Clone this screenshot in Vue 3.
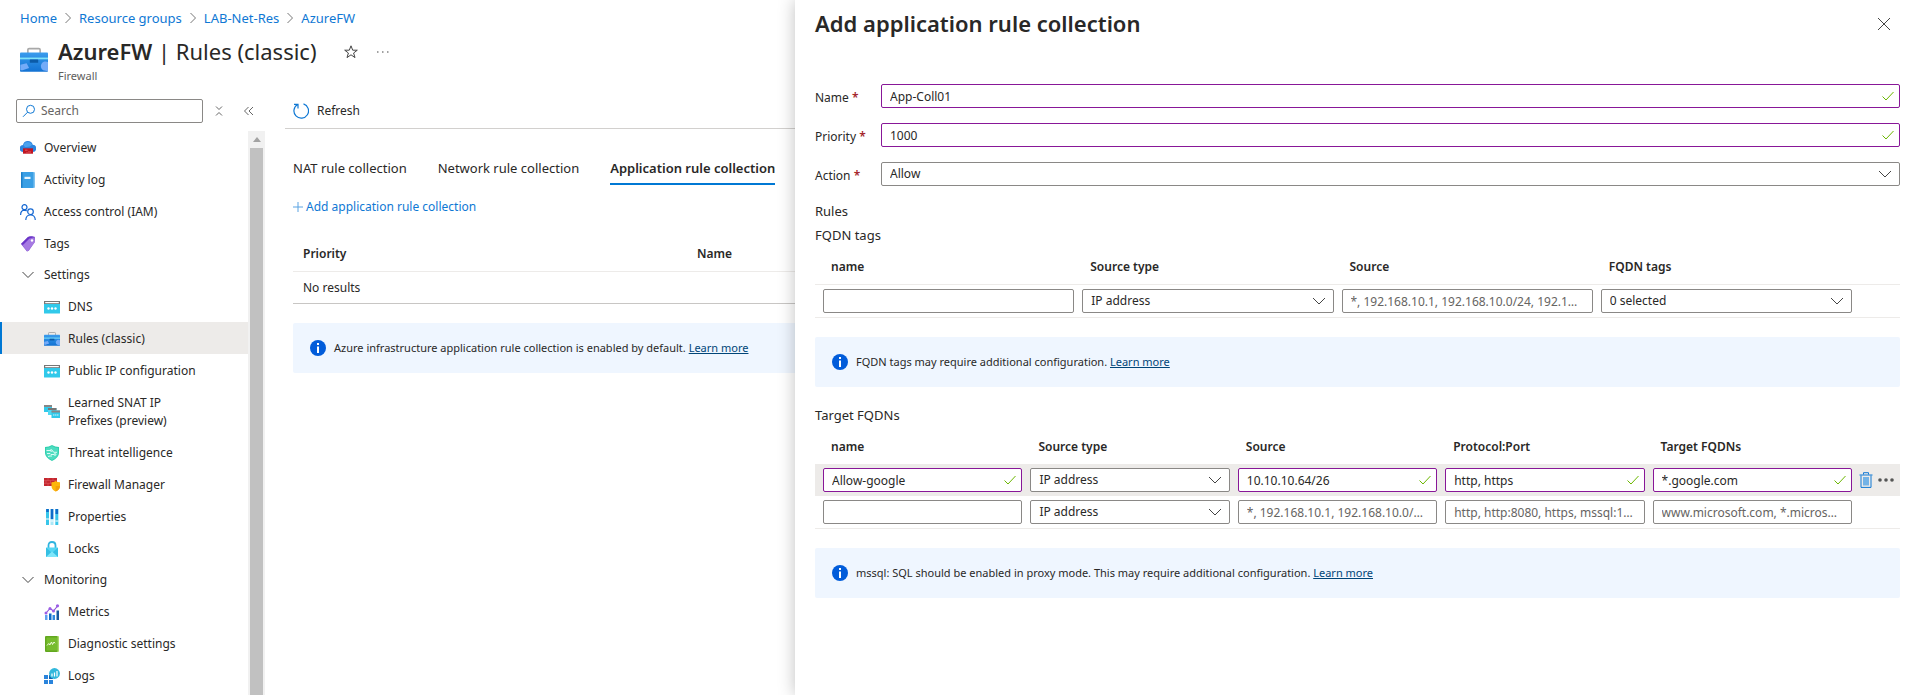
<script setup>
import { ref } from 'vue'

const glyphs = {
  toolbox: `<defs><linearGradient id="case" x1="0" y1="0" x2="0" y2="1"><stop offset="0" stop-color="#3a9ced"/><stop offset="1" stop-color="#1272d3"/></linearGradient></defs><path d="M4.500 4V2.200Q4.500 1.500 5.200 1.500H10.800Q11.500 1.500 11.500 2.200V4" fill="none" stroke="#a8a8a8" stroke-width=".9"/><rect x="0" y="3.700" width="16" height="11" rx=".5" fill="url(#case)"/><rect x="0" y="6.600" width="16" height="1" fill="#7fe3f8"/><rect x="5.600" y="7.700" width="4.800" height="1.900" rx=".3" fill="#0b5ba8"/><path d="M.200 10.700L3.800 9.900 5.200 12.600 1.500 13.800H.200zM16 9.200A2.600 2.600 0 0 0 13.200 13.800L16 14.400z" fill="#74abf8"/>`,
  overview: `<path d="M3.400 12A3.500 3.500 0 0 1 3 5 5 5 0 0 1 12.700 4.800 3.600 3.600 0 0 1 12.600 12z" fill="#2d84df"/><path d="M3.400 5A4.800 4.800 0 0 1 12.200 4.800Q10 7.500 5 7z" fill="#4ba2ef"/><rect x="3" y="8.300" width="10" height="5.400" fill="#c01522"/><path d="M5 10.200H7.500M8 12h3M7 12v1.200" stroke="#f4888c" stroke-width=".6"/>`,
  book: `<rect x="2" y="0" width="13" height="16" rx="1" fill="#82c3ef"/><rect x="1" y="0" width="12.500" height="16" rx="1" fill="#3a9fe4"/><rect x="1" y="0" width="1.500" height="16" rx=".7" fill="#1c7fc9"/><rect x="4.500" y="4.800" width="6" height="2.200" fill="#e9f5fd"/>`,
  people: `<g fill="none" stroke="#1467d2" stroke-width="1.200"><circle cx="4.500" cy="3.200" r="2.500"/><path d="M.6 11Q.6 6.300 4.500 6.200 5.700 6.200 6.700 7"/><circle cx="10.500" cy="7.700" r="2.800"/><path d="M5.800 16Q5.900 11 10.500 11T15.300 16"/></g>`,
  tag: `<path d="M1 8L8 1Q9 .3 10 .3L14 .6Q15 .8 15 1.800L14.700 6 9 14.500 7 15.500z" fill="#7f4ed0"/><path d="M1 8L8 1 13 .3 5 9z" fill="#6a35c8"/><path d="M2.500 9.500L9.500 2.500 14.500 2 14.700 6.500 7.500 15.500z" fill="#a67ae2"/><circle cx="12" cy="4.500" r="1.200" fill="#fff"/>`,
  dns: `<rect x="0" y="2" width="16" height="12.500" rx=".5" fill="#31c9ea"/><path d="M0 2H16V5H0z" fill="#767676"/><rect x="1.200" y="3" width="13.600" height="1.200" fill="#fff"/><circle cx="4.500" cy="9.500" r="1.200" fill="#fff"/><circle cx="8" cy="9.500" r="1.200" fill="#fff"/><circle cx="11.500" cy="9.500" r="1.200" fill="#fff"/>`,
  prefixes: `<rect x="0" y="1" width="8" height="7" fill="#31c9ea"/><rect x="0" y="1" width="8" height="2" fill="#868686"/><rect x="4" y="4" width="8.500" height="7" fill="#50d8f2"/><rect x="4" y="4" width="8.500" height="2" fill="#767676"/><rect x="7.500" y="6.500" width="8.500" height="7.500" fill="#31c9ea"/><rect x="7.500" y="6.500" width="8.500" height="2" fill="#868686"/><path d="M9.200 11h1.200M11.200 11h1.200M13.200 11h1.200" stroke="#fff" stroke-width="1.200"/>`,
  shield: `<path d="M8 0Q11 2 15 2V8Q15 12.500 8 16 1 12.500 1 8V2Q5 2 8 0z" fill="#2fcfae"/><path d="M8 1Q11 3 14 3V8Q14 12 8 15 2 12 2 8V3Q5 3 8 1z" fill="#4ddcc0"/><g fill="none" stroke="#e9fffa" stroke-width=".9"><path d="M2.500 5.500H6.500M8 5.500l2 1.800h3M3 8.500h3l1 1h3M4 11.500l2-.5h2"/><circle cx="7.200" cy="5.500" r=".9"/><circle cx="11" cy="9.500" r=".9"/></g>`,
  manager: `<rect x="0" y="1" width="13" height="8" fill="#c4262e"/><path d="M0 3.600h13M0 6.300h13M4 1v2.600M9 1v2.600M2 3.600v2.700M6.500 3.600v2.700M4 6.300V9" stroke="#e2666d" stroke-width=".5"/><path d="M11.700 4Q13.500 5.300 16 5.300V9Q16 12.500 11.700 14.500 7.500 12.500 7.500 9V5.300Q10 5.300 11.700 4z" fill="#fdb70c"/><path d="M11.700 9H16Q16 12.500 11.700 14.500z" fill="#f4a00c"/>`,
  properties: `<path d="M3.500 0V16" stroke="#38c6ea" stroke-width="3"/><path d="M8 0V16" stroke="#a9e7f7" stroke-width="3"/><path d="M12.800 0V16" stroke="#38c6ea" stroke-width="3"/><path d="M8 0V10M3.500 0V3M12.800 0V5" stroke="#0f6cc9" stroke-width="2.600"/><path d="M2 10h3M11.300 12h3M6.500 12h3" stroke="#fff" stroke-width="1"/>`,
  lock: `<path d="M4.500 7V4.500Q4.500 1 8 1T11.500 4.500V7" fill="none" stroke="#2fb4df" stroke-width="1.800"/><rect x="2" y="6.500" width="12" height="9.500" rx=".7" fill="#55d6f3"/><path d="M2 6.500L8 12 14 6.500V16H2z" fill="#35bfe3"/><path d="M2 16L8 10.500 14 16z" fill="#7ee6fa"/>`,
  metrics: `<path d="M1 11h2.500v5H1z" fill="#5ea0ef"/><path d="M5 9.500h2.500V16H5z" fill="#0f6cc9"/><path d="M8.500 11H11v5H8.500z" fill="#2f8ae0"/><path d="M12.500 6.500H15V16h-2.500z" fill="#17599f"/><path d="M2 9L6 4.500 9.500 7 13.500 2" fill="none" stroke="#8a4fd8" stroke-width="1.100"/><g fill="#9b5de5"><circle cx="2" cy="9" r="1.500"/><circle cx="6" cy="4.500" r="1.500"/><circle cx="9.500" cy="7" r="1.500"/><circle cx="13.500" cy="1.800" r="1.600"/></g>`,
  diagnostic: `<rect x="2" y="0" width="13" height="16" rx="1" fill="#aada68"/><rect x="1" y="0" width="12.500" height="16" rx="1" fill="#62a71f"/><rect x="2.500" y="1.500" width="10.500" height="13" fill="#76bc2d"/><path d="M3 9.500l1.800-2 1 1.500 1.700-3 1 2.500L10 6l1 1.300" fill="none" stroke="#effadb" stroke-width="1"/>`,
  logs: `<path d="M0 7h4v4H0zM0 12h4v4H0zM5 12h4v4H5z" fill="#2a84dc"/><path d="M5 7h4v4H5z" fill="#0f5fb2"/><circle cx="10.500" cy="5.500" r="5.400" fill="#32b8dc"/><path d="M8 5.500V8.500M10.500 4.500v4M13 3v5.500" stroke="#fff" stroke-width="1.200"/>`,
}

const topItems = [
  { label: 'Overview', icon: 'overview' },
  { label: 'Activity log', icon: 'book' },
  { label: 'Access control (IAM)', icon: 'people' },
  { label: 'Tags', icon: 'tag' },
]
const groups = [
  {
    label: 'Settings',
    items: [
      { label: 'DNS', icon: 'dns' },
      { label: 'Rules (classic)', icon: 'toolbox', active: true },
      { label: 'Public IP configuration', icon: 'dns' },
      { label: 'Learned SNAT IP Prefixes (preview)', icon: 'prefixes' },
      { label: 'Threat intelligence', icon: 'shield' },
      { label: 'Firewall Manager', icon: 'manager' },
      { label: 'Properties', icon: 'properties' },
      { label: 'Locks', icon: 'lock' },
    ],
  },
  {
    label: 'Monitoring',
    items: [
      { label: 'Metrics', icon: 'metrics' },
      { label: 'Diagnostic settings', icon: 'diagnostic' },
      { label: 'Logs', icon: 'logs' },
    ],
  },
]
const crumbs = ['Home', 'Resource groups', 'LAB-Net-Res', 'AzureFW']
const tabs = ['NAT rule collection', 'Network rule collection', 'Application rule collection']
const activeTab = ref(2)

const name = ref('App-Coll01')
const priority = ref('1000')

const targetRows = ref([
  { name: 'Allow-google', source: '10.10.10.64/26', protocol: 'http, https', fqdns: '*.google.com', filled: true },
  { name: '', source: '', protocol: '', fqdns: '', filled: false },
])
const targetFields = [
  { key: 'name', label: 'name', placeholder: '' },
  { key: 'type', label: 'Source type' },
  { key: 'source', label: 'Source', placeholder: '*, 192.168.10.1, 192.168.10.0/24, 192.168.10.2' },
  { key: 'protocol', label: 'Protocol:Port', placeholder: 'http, http:8080, https, mssql:1433' },
  { key: 'fqdns', label: 'Target FQDNs', placeholder: 'www.microsoft.com, *.microsoft.com' },
]
</script>

<template>
  <div class="portal">
    <header class="header">
      <nav class="crumbs" aria-label="Breadcrumb">
        <template v-for="(c, i) in crumbs" :key="c">
          <svg v-if="i" class="crumb-sep" viewBox="0 0 8 12"><path d="M1.500 1L6.500 6 1.500 11" /></svg>
          <a href="#">{{ c }}</a>
        </template>
      </nav>
      <div class="heading">
        <svg class="heading-icon" viewBox="0 0 16 16" v-html="glyphs.toolbox"></svg>
        <div>
          <div class="title-row">
            <h1><strong>AzureFW</strong> | Rules (classic)</h1>
            <button class="icon-btn star" aria-label="Favorite">
              <svg viewBox="0 0 16 16"><path d="M8 1.800L9.700 6.200H14.300L10.600 9 12 13.600 8 10.800 4 13.600 5.400 9 1.700 6.200H6.300z" /></svg>
            </button>
            <button class="icon-btn" aria-label="More">
              <svg viewBox="0 0 16 16"><path d="M2 8h1.500M7 8h1.500M12 8h1.500" /></svg>
            </button>
          </div>
          <p class="kind">Firewall</p>
        </div>
      </div>
    </header>

    <div class="body">
      <aside class="side">
        <div class="side-tools">
          <div class="search">
            <svg viewBox="0 0 14 14"><circle cx="8.500" cy="5.300" r="4" /><path d="M5.600 8.200L1 12.800" /></svg>
            <input type="search" placeholder="Search" aria-label="Search" />
          </div>
          <button class="icon-btn small" aria-label="Collapse groups">
            <svg viewBox="0 0 12 12"><path d="M3 1.500l3 3 3-3M3 10.500l3-3 3 3" /></svg>
          </button>
          <button class="icon-btn small" aria-label="Hide menu">
            <svg viewBox="0 0 12 12"><path d="M5.500 2l-4 4 4 4M10 2L6 6l4 4" /></svg>
          </button>
        </div>
        <div class="menu-wrap">
          <nav class="menu">
            <a v-for="it in topItems" :key="it.label" href="#" class="item">
              <svg viewBox="0 0 16 16" v-html="glyphs[it.icon]"></svg><span>{{ it.label }}</span>
            </a>
            <template v-for="g in groups" :key="g.label">
              <button class="group">
                <svg class="chev" viewBox="0 0 16 16"><path d="M2.500 5l5.500 5.500L13.500 5" /></svg>{{ g.label }}
              </button>
              <a v-for="it in g.items" :key="it.label" href="#" class="item sub" :class="{ active: it.active }">
                <svg viewBox="0 0 16 16" v-html="glyphs[it.icon]"></svg><span>{{ it.label }}</span>
              </a>
            </template>
          </nav>
          <div class="rail"><span class="arrow"></span><span class="thumb"></span></div>
        </div>
      </aside>

      <main class="main">
        <div class="command">
          <button class="refresh">
            <svg viewBox="0 0 16 16"><path d="M10.500 .900A7.300 7.300 0 1 1 4.600 1.500M1 1.400H5V5.400" /></svg>Refresh
          </button>
        </div>
        <div class="content">
          <div class="tabs" role="tablist">
            <button v-for="(t, i) in tabs" :key="t" role="tab" :aria-selected="i === activeTab" :class="{ on: i === activeTab }" @click="activeTab = i">{{ t }}</button>
          </div>
          <button class="add">
            <svg viewBox="0 0 10 10"><path d="M5 0V10M0 5H10" /></svg>Add application rule collection
          </button>
          <table class="results">
            <thead><tr><th>Priority</th><th>Name</th></tr></thead>
            <tbody><tr><td colspan="2">No results</td></tr></tbody>
          </table>
          <div class="info">
            <svg viewBox="0 0 16 16"><circle cx="8" cy="8" r="8" /><path d="M7 6.500h2V13H7zM7 3h2v2H7z" /></svg>
            <p>Azure infrastructure application rule collection is enabled by default. <a href="#">Learn more</a></p>
          </div>
        </div>
      </main>
    </div>

    <section class="panel" role="dialog" aria-labelledby="panel-title">
      <div class="panel-head">
        <h2 id="panel-title">Add application rule collection</h2>
        <button class="icon-btn" aria-label="Close">
          <svg viewBox="0 0 16 16"><path d="M2 2l12 12M14 2L2 14" /></svg>
        </button>
      </div>

      <form class="form" @submit.prevent>
        <label for="f-name">Name <b>*</b></label>
        <div class="field ok">
          <input id="f-name" v-model="name" type="text" />
          <svg viewBox="0 0 14 14"><path d="M1.500 7.500l3.500 3.500L12.500 3" /></svg>
        </div>
        <label for="f-priority">Priority <b>*</b></label>
        <div class="field ok">
          <input id="f-priority" v-model="priority" type="text" />
          <svg viewBox="0 0 14 14"><path d="M1.500 7.500l3.500 3.500L12.500 3" /></svg>
        </div>
        <label for="f-action">Action <b>*</b></label>
        <div class="field pick">
          <select id="f-action"><option>Allow</option><option>Deny</option></select>
          <svg viewBox="0 0 14 14"><path d="M1 4l6 6 6-6" /></svg>
        </div>
      </form>

      <h3>Rules</h3>
      <h3>FQDN tags</h3>
      <table class="grid four">
        <thead><tr><th>name</th><th>Source type</th><th>Source</th><th>FQDN tags</th></tr></thead>
        <tbody>
          <tr>
            <td><div class="field"><input type="text" aria-label="FQDN tag rule name" /></div></td>
            <td>
              <div class="field pick">
                <select aria-label="FQDN tag source type"><option>IP address</option><option>IP Group</option></select>
                <svg viewBox="0 0 14 14"><path d="M1 4l6 6 6-6" /></svg>
              </div>
            </td>
            <td><div class="field"><input type="text" aria-label="FQDN tag source" placeholder="*, 192.168.10.1, 192.168.10.0/24, 192.168.10.2" /></div></td>
            <td>
              <div class="field pick">
                <select aria-label="FQDN tags"><option>0 selected</option></select>
                <svg viewBox="0 0 14 14"><path d="M1 4l6 6 6-6" /></svg>
              </div>
            </td>
          </tr>
        </tbody>
      </table>
      <div class="info">
        <svg viewBox="0 0 16 16"><circle cx="8" cy="8" r="8" /><path d="M7 6.500h2V13H7zM7 3h2v2H7z" /></svg>
        <p>FQDN tags may require additional configuration. <a href="#">Learn more</a></p>
      </div>

      <h3 class="spaced">Target FQDNs</h3>
      <table class="grid five">
        <thead><tr><th v-for="f in targetFields" :key="f.key">{{ f.label }}</th></tr></thead>
        <tbody>
          <tr v-for="(row, r) in targetRows" :key="r" :class="{ hot: row.filled }">
            <td v-for="f in targetFields" :key="f.key">
              <div v-if="f.key === 'type'" class="field pick">
                <select :aria-label="`Source type, row ${r + 1}`"><option>IP address</option><option>IP Group</option></select>
                <svg viewBox="0 0 14 14"><path d="M1 4l6 6 6-6" /></svg>
              </div>
              <div v-else class="field" :class="{ ok: row.filled }">
                <input v-model="row[f.key]" type="text" :placeholder="f.placeholder" :aria-label="`${f.label}, row ${r + 1}`" />
                <svg v-if="row.filled" viewBox="0 0 14 14"><path d="M1.500 7.500l3.500 3.500L12.500 3" /></svg>
              </div>
            </td>
            <td class="acts">
              <template v-if="row.filled">
                <button aria-label="Delete row">
                  <svg class="bin" viewBox="0 0 14 16"><path d="M.500 3H13.500M4.500 2.500V.700H9.500V2.500M2 3.500V15.400H12V3.500" /><rect x="4" y="5" width="6" height="8.500" /></svg>
                </button>
                <button aria-label="More actions">
                  <svg class="dots" viewBox="0 0 18 4"><circle cx="3" cy="2" r="1.800" /><circle cx="9" cy="2" r="1.800" /><circle cx="15" cy="2" r="1.800" /></svg>
                </button>
              </template>
            </td>
          </tr>
        </tbody>
      </table>
      <div class="info">
        <svg viewBox="0 0 16 16"><circle cx="8" cy="8" r="8" /><path d="M7 6.500h2V13H7zM7 3h2v2H7z" /></svg>
        <p>mssql: SQL should be enabled in proxy mode. This may require additional configuration. <a href="#">Learn more</a></p>
      </div>
    </section>
  </div>
</template>

<style>
body {
  margin: 0;
  overflow: hidden;
}
</style>

<style scoped>
.portal {
  position: relative;
  display: flex;
  flex-direction: column;
  height: 100vh;
  overflow: hidden;
  background: #fff;
  color: #292827;
  font: 12px/18px "Noto Sans", "Open Sans", sans-serif;
}
.portal *,
.portal *::before {
  box-sizing: border-box;
}
button {
  padding: 0;
  border: 0;
  background: none;
  color: inherit;
  font: inherit;
  cursor: pointer;
}
a {
  color: #0f78d4;
  text-decoration: none;
}
svg {
  flex: none;
  fill: none;
}
h1, h2, h3, p {
  margin: 0;
  font-weight: 400;
}

.header {
  padding: 9px 20px 0;
}
.crumbs {
  display: flex;
  align-items: center;
  gap: 7px;
  font-size: 13px;
}
.crumb-sep {
  width: 8px;
  height: 12px;
  stroke: #777;
}
.heading {
  display: flex;
  gap: 10px;
  margin-top: 10px;
}
.heading-icon {
  width: 28px;
  height: 28px;
  margin-top: 9px;
}
.title-row {
  display: flex;
  align-items: center;
  height: 30px;
}
h1 {
  margin-right: 26px;
  padding-bottom: 2px;
  font-size: 22px;
  line-height: 28px;
}
h1 strong {
  font-weight: 600;
}
.icon-btn {
  display: flex;
  align-items: center;
  justify-content: center;
  width: 16px;
  height: 16px;
}
.icon-btn svg {
  width: 16px;
  height: 16px;
  stroke: #444;
}
.icon-btn.star {
  margin-right: 16px;
}
.icon-btn.small svg {
  width: 12px;
  height: 12px;
  stroke: #666;
}
.kind {
  font-size: 11px;
  color: #605e5c;
}

.body {
  display: flex;
  flex: 1;
  min-height: 0;
}
.side {
  display: flex;
  flex-direction: column;
  width: 265px;
  flex: none;
}
.side-tools {
  display: flex;
  align-items: center;
  gap: 14px;
  padding: 14px 8px 8px 16px;
}
.search {
  display: flex;
  align-items: center;
  gap: 5px;
  flex: 1;
  min-width: 0;
  height: 24px;
  margin-right: -6px;
  padding: 0 5px;
  border: 1px solid #8a8886;
  border-radius: 2px;
}
.search svg {
  width: 14px;
  height: 14px;
  stroke: #0f78d4;
}
.search input {
  flex: 1;
  min-width: 0;
  padding: 0;
  border: 0;
  outline: 0;
  font: inherit;
}
input::placeholder {
  color: #666462;
  opacity: 1;
}
.menu-wrap {
  display: flex;
  flex: 1;
  min-height: 0;
}
.menu {
  flex: 1;
  min-width: 0;
  overflow: hidden;
}
.item {
  display: flex;
  align-items: center;
  gap: 8px;
  min-height: 32px;
  padding: 8px 48px 6px 20px;
  color: inherit;
  line-height: 18px;
}
.item.sub {
  padding-left: 44px;
}
.item svg {
  width: 16px;
  height: 16px;
}
.item.active {
  background: #edebe9;
  box-shadow: inset 2px 0 #0078d4;
}
.group {
  display: flex;
  align-items: center;
  gap: 8px;
  width: 100%;
  height: 31px;
  padding: 0 20px;
}
.chev {
  width: 16px;
  height: 16px;
  stroke: #444;
}
.rail {
  display: flex;
  flex-direction: column;
  align-items: center;
  width: 17px;
  background: #f1f1f1;
}
.arrow {
  margin: 6px 0;
  border: 4px solid transparent;
  border-top-width: 0;
  border-bottom: 5px solid #a3a3a3;
}
.thumb {
  flex: 1;
  width: 13px;
  background: #c1c1c1;
}

.main {
  flex: 1;
  min-width: 0;
  padding-left: 20px;
}
.command {
  display: flex;
  align-items: center;
  height: 44px;
  padding: 10px 8px 2px;
  border-bottom: 1px solid #d2d0ce;
}
.refresh {
  display: flex;
  align-items: center;
  gap: 8px;
}
.refresh svg {
  width: 16px;
  height: 16px;
  stroke: #0f78d4;
  stroke-width: 1.2;
}
.content {
  padding: 24px 20px 0 8px;
}
.tabs {
  display: flex;
  gap: 31px;
  font-size: 13px;
}
.tabs button {
  height: 32px;
  border-bottom: 2px solid transparent;
  white-space: nowrap;
}
.tabs .on {
  border-color: #0078d4;
  font-weight: 600;
}
.add {
  display: flex;
  align-items: center;
  gap: 3px;
  margin-top: 13px;
  color: #0f78d4;
}
.add svg {
  width: 10px;
  height: 10px;
  stroke: #5ba3e2;
}
.results {
  width: 100%;
  margin-top: 21px;
  border-spacing: 0;
  table-layout: fixed;
}
.results th,
.results td {
  height: 35px;
  padding: 0 10px;
  border-bottom: 1px solid #edebe9;
  text-align: left;
  font-weight: 600;
}
.results td {
  height: 32px;
  border-color: #c8c6c4;
  font-weight: 400;
}
.results th:first-child {
  width: 394px;
}
.info {
  display: flex;
  align-items: center;
  gap: 8px;
  min-height: 50px;
  margin-top: 19px;
  padding: 4px 17px;
  border-radius: 2px;
  background: #eff6ff;
  font-size: 11px;
}
.info svg {
  width: 16px;
  height: 16px;
}
.info circle {
  fill: #015cda;
}
.info path {
  fill: #fff;
}
.info a {
  color: #004578;
  text-decoration: underline;
}

.panel {
  position: absolute;
  top: 0;
  right: 0;
  bottom: 0;
  left: 795px;
  overflow: hidden;
  padding: 0 19px 0 20px;
  background: #fff;
  box-shadow: 0 0 16px rgba(0, 0, 0, 0.25);
}
.panel-head {
  display: flex;
  align-items: center;
  justify-content: space-between;
  height: 48px;
  padding-right: 8px;
}
h2 {
  padding-bottom: 2px;
  font-size: 22px;
  line-height: 28px;
  font-weight: 600;
}
.form {
  display: grid;
  grid-template-columns: 66px 1fr;
  row-gap: 15px;
  align-items: center;
  margin: 36px 0 13px;
}
.form label {
  padding-top: 3px;
}
.form b {
  color: #a4262c;
  font-weight: 600;
}
.field {
  position: relative;
  height: 24px;
}
.field input,
.field select {
  display: block;
  width: 100%;
  height: 24px;
  padding: 0 8px;
  border: 1px solid #8a8886;
  border-radius: 2px;
  outline: 0;
  background: #fff;
  color: #292827;
  font: inherit;
  appearance: none;
  text-overflow: ellipsis;
}
.field.ok input {
  padding-right: 24px;
  border-color: #881798;
}
.field svg {
  position: absolute;
  top: 5px;
  right: 5px;
  width: 14px;
  height: 14px;
  stroke: #6bb700;
  pointer-events: none;
}
.field.pick svg {
  right: 8px;
  stroke: #444;
}
h3 {
  font-size: 13px;
  line-height: 24px;
}
h3.spaced {
  margin-top: 16px;
}
.grid {
  display: block;
}
.grid thead,
.grid tbody {
  display: block;
}
.grid tr {
  display: grid;
  align-items: center;
  padding-left: 4px;
}
.four tr {
  grid-template-columns: repeat(4, 1fr) 44px;
}
.five tr {
  grid-template-columns: repeat(5, 1fr) 44px;
}
.grid th {
  padding: 2px 12px 0;
  text-align: left;
  font-weight: 600;
}
.grid thead tr {
  height: 37px;
}
.grid td {
  min-width: 0;
  padding: 0 4px;
}
.grid tbody tr {
  height: 32px;
}
.grid tbody {
  border-bottom: 1px solid #edebe9;
}
.four thead {
  border-bottom: 1px solid #edebe9;
}
.grid tr.hot {
  background: #edebe9;
}
.grid .acts {
  display: flex;
  align-items: center;
  gap: 4px;
  padding: 0 0 0 3px;
}
.acts button {
  display: flex;
}
.bin {
  width: 14px;
  height: 16px;
  stroke: #0f78d4;
}
.bin rect {
  fill: #74b3e6;
  stroke: none;
}
.dots {
  width: 18px;
  height: 4px;
  fill: #555;
}
</style>
